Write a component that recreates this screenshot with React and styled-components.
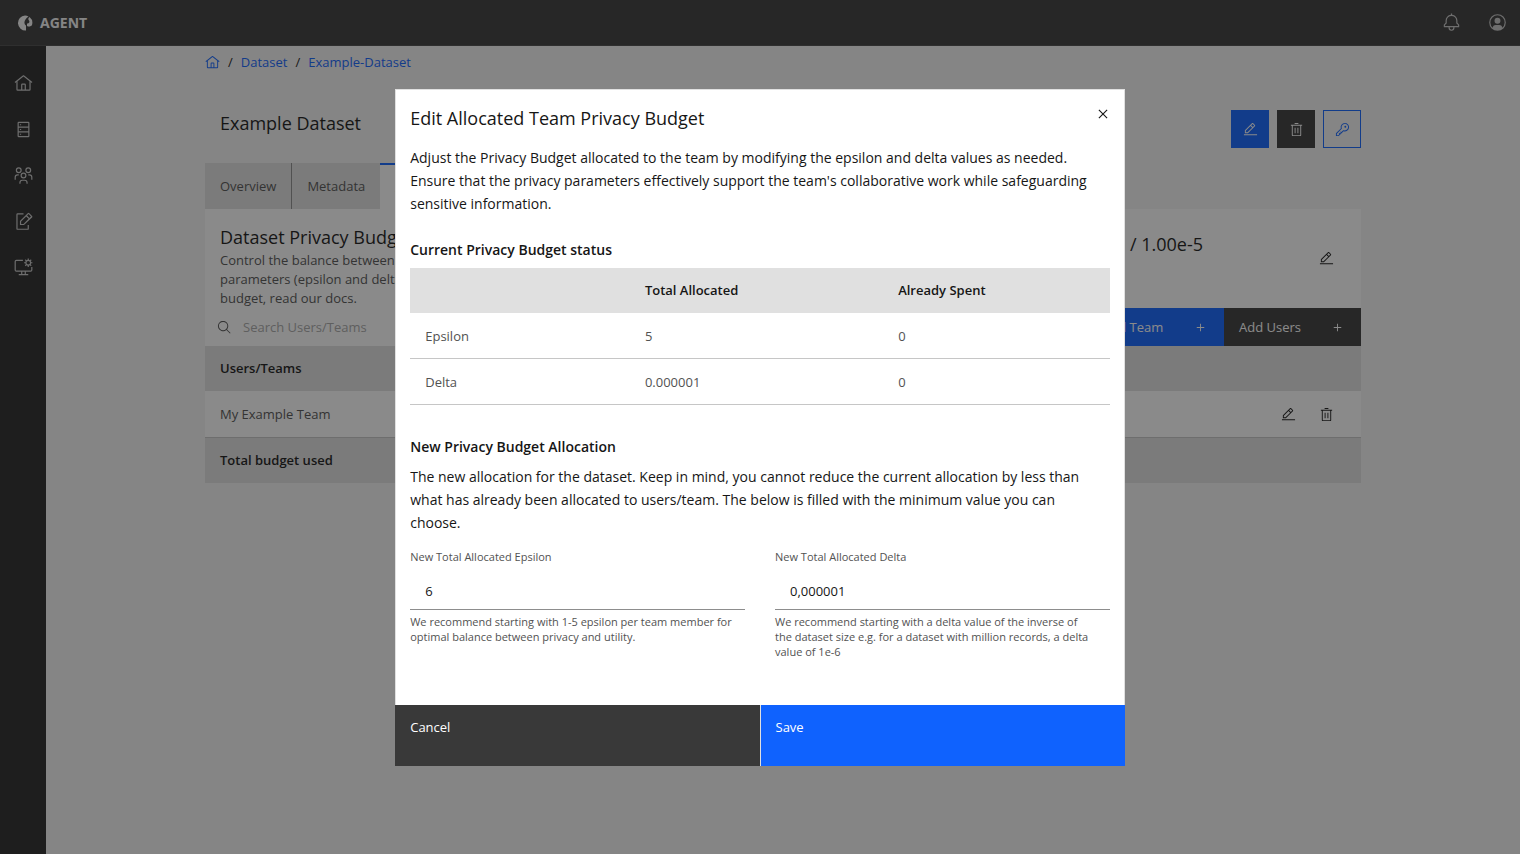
import React from "react"
import styled, { createGlobalStyle, css } from "styled-components"

const colors = {
  page: "#f4f4f4",
  white: "#ffffff",
  header: "#393939",
  sidebar: "#262626",
  grey_200: "#e0e0e0",
  grey_300: "#c6c6c6",
  grey_500: "#8d8d8d",
  grey_700: "#525252",
  text: "#161616",
  blue: "#0f62fe",
  overlay: "rgba(22, 22, 22, 0.5)"
}

const icons = {
  home:
    "M16.6123,2.2138a1.01,1.01,0,0,0-1.2427,0L1,13.4194l1.2427,1.5717L4,13.6208V26a2.0041,2.0041,0,0,0,2,2H26a2.0037,2.0037,0,0,0,2-2V13.63L29.7573,15,31,13.4282ZM18,26H14V18h4Zm2,0V18a2.0023,2.0023,0,0,0-2-2H14a2.002,2.002,0,0,0-2,2v8H6V12.0615l10-7.79,10,7.8005V26Z",
  database:
    "M24,3H8A2,2,0,0,0,6,5V27a2,2,0,0,0,2,2H24a2,2,0,0,0,2-2V5A2,2,0,0,0,24,3Zm0,2v6H8V5ZM8,19V13H24v6Zm0,8V21H24v6ZM10,7h2v2h-2zM10,15h2v2h-2zM10,23h2v2h-2z",
  teams:
    "M26,14H24v2h2a3.0033,3.0033,0,0,1,3,3v4h2V19A5.0058,5.0058,0,0,0,26,14Z M24,4a3,3,0,1,1-3,3,3,3,0,0,1,3-3m0-2a5,5,0,1,0,5,5A5,5,0,0,0,24,2Z M23,30H21V28a3.0033,3.0033,0,0,0-3-3H14a3.0033,3.0033,0,0,0-3,3v2H9V28a5.0059,5.0059,0,0,1,5-5h4a5.0059,5.0059,0,0,1,5,5Z M16,13a3,3,0,1,1-3,3,3,3,0,0,1,3-3m0-2a5,5,0,1,0,5,5A5,5,0,0,0,16,11Z M8,14H6a5.0059,5.0059,0,0,0-5,5v4H3V19a3.0033,3.0033,0,0,1,3-3H8Z M8,4A3,3,0,1,1,5,7,3,3,0,0,1,8,4M8,2a5,5,0,1,0,5,5A5,5,0,0,0,8,2Z",
  note:
    "M23,30H6a2,2,0,0,1-2-2V4A2,2,0,0,1,6,2H16V4H6V28H23V22h2v6A2,2,0,0,1,23,30Z M30.4,6.6,25.9,2.1a2,2,0,0,0-2.8,0L10,15.2V22h6.8L30.4,9.4A2,2,0,0,0,30.4,6.6ZM16,20H12V16l8.5-8.5,4,4ZM26,10,22,6l2.5-2.5,4,4Z",
  desktop:
    "M29,15v5a1,1,0,0,1-1,1H4a1,1,0,0,1-1-1V6A1,1,0,0,1,4,5H15V3H4A3,3,0,0,0,1,6V20a3,3,0,0,0,3,3h8v4H8v2H24V27H20V23h8a3,3,0,0,0,3-3V15ZM18,27H14V23h4Z M31,9V7H28.9a5,5,0,0,0-.7-1.8l1.5-1.5L28.3,2.3,26.8,3.8A5,5,0,0,0,25,3.1V1H23V3.1a5,5,0,0,0-1.8.7L19.7,2.3,18.3,3.7l1.5,1.5A5,5,0,0,0,19.1,7H17v2h2.1a5,5,0,0,0,.7,1.8l-1.5,1.5,1.4,1.4,1.5-1.5a5,5,0,0,0,1.8.7V15h2V12.9a5,5,0,0,0,1.8-.7l1.5,1.5,1.4-1.4-1.5-1.5A5,5,0,0,0,28.9,9Zm-7,2a3,3,0,1,1,3-3A3,3,0,0,1,24,11Z",
  bell:
    "M28.7071,19.293,26,16.5859V13a10.0136,10.0136,0,0,0-9-9.9492V1H15V3.0508A10.0136,10.0136,0,0,0,6,13v3.5859L3.2929,19.293A1,1,0,0,0,3,20v3a1,1,0,0,0,1,1h7v.7768a5.152,5.152,0,0,0,4.5,5.1987A5.0057,5.0057,0,0,0,21,25V24h7a1,1,0,0,0,1-1V20A1,1,0,0,0,28.7071,19.293ZM19,25a3,3,0,0,1-6,0V24h6Zm8-3H5V20.4141L7.707,17.707A1,1,0,0,0,8,17V13a8,8,0,0,1,16,0v4a1,1,0,0,0,.293.707L27,20.4141Z",
  avatar:
    "M16,8a5,5,0,1,0,5,5A5,5,0,0,0,16,8Z M16,2A14,14,0,1,0,30,16,14.0158,14.0158,0,0,0,16,2Zm7.9925,22.9258A5.0016,5.0016,0,0,0,19,20H13a5.0016,5.0016,0,0,0-4.9925,4.9258,12,12,0,1,1,15.985,0Z",
  edit:
    "M2 26H30V28H2z M25.4 9c.8-.8.8-2 0-2.8l-3.6-3.6c-.8-.8-2-.8-2.8 0l-15 15V24h6.4L25.4 9zM20.4 4L24 7.6l-3 3L17.4 7 20.4 4zM6 22v-3.6l10-10 3.6 3.6-10 10H6z",
  trash:
    "M12 12H14V24H12z M18 12H20V24H18z M4 6V8H6V28a2 2 0 002 2H24a2 2 0 002-2V8h2V6zM8 28V8H24V28z M12 2H20V4H12z",
  key:
    "M21,2a8.9977,8.9977,0,0,0-8.6119,11.6118L2,24v6H8L18.3881,19.6118A9,9,0,1,0,21,2Zm0,16a7.0125,7.0125,0,0,1-2.0322-.3022L17.821,17.35l-.8472.8472-3.1811,3.1812L12.4141,20,11,21.4141l1.3787,1.3786-1.5859,1.586L9.4141,23,8,24.4141l1.3787,1.3786L7.1716,28H4V24.8284l9.8023-9.8023.8472-.8474-.3473-1.1467A7,7,0,1,1,21,18Z M22,8a2,2,0,1,0,2,2A2,2,0,0,0,22,8Z",
  search:
    "M29,27.5859l-7.5521-7.5521a11.0177,11.0177,0,1,0-1.4141,1.4141L27.5859,29ZM4,13a9,9,0,1,1,9,9A9.01,9.01,0,0,1,4,13Z",
  add: "M17 15L17 8 15 8 15 15 8 15 8 17 15 17 15 24 17 24 17 17 24 17 24 15z",
  close:
    "M24 9.4L22.6 8 16 14.6 9.4 8 8 9.4 14.6 16 8 22.6 9.4 24 16 17.4 22.6 24 24 22.6 17.4 16 24 9.4z"
}

const Icon = ({ name, size = 15 }) => (
  <svg width={size} height={size} viewBox="0 0 32 32" fill="currentColor" aria-hidden="true">
    <path d={icons[name]} />
  </svg>
)

const Logo = () => (
  <svg width="16" height="16" viewBox="0 0 32 32" aria-hidden="true">
    <path
      fill="currentColor"
      d="M16 1A15 15 0 1 0 18 31V21C14 18 14 13 17 9C18 7 20 5 23 3A15 15 0 0 0 16 1ZM25 4A15 15 0 0 1 30 20C28 23 24 24 20 22V17C24 17 26 14 24 11C22 9 22 6 25 4Z"
    />
  </svg>
)

const navItems = [
  { icon: "home", label: "Home" },
  { icon: "database", label: "Datasets" },
  { icon: "teams", label: "Teams" },
  { icon: "note", label: "Projects" },
  { icon: "desktop", label: "Settings" }
]

const budgetRows = [
  { name: "Epsilon", total: "5", spent: "0" },
  { name: "Delta", total: "0.000001", spent: "0" }
]

const fields = [
  {
    id: "epsilon",
    label: "New Total Allocated Epsilon",
    value: "6",
    help:
      "We recommend starting with 1-5 epsilon per team member for\noptimal balance between privacy and utility."
  },
  {
    id: "delta",
    label: "New Total Allocated Delta",
    value: "0,000001",
    help:
      "We recommend starting with a delta value of the inverse of\nthe dataset size e.g. for a dataset with million records, a delta\nvalue of 1e-6"
  }
]

const EditBudgetModal = () => (
  <Overlay>
    <Modal role="dialog" aria-modal="true" aria-labelledby="modal-title">
      <ModalBody>
        <ModalHeader>
          <Title as="h2" id="modal-title">
            Edit Allocated Team Privacy Budget
          </Title>
          <CloseButton aria-label="Close">
            <Icon name="close" size={18} />
          </CloseButton>
        </ModalHeader>
        <Intro>
          Adjust the Privacy Budget allocated to the team by modifying the epsilon and delta values
          as needed. Ensure that the privacy parameters effectively support the team's collaborative
          work while safeguarding sensitive information.
        </Intro>
        <Heading>Current Privacy Budget status</Heading>
        <BudgetTable>
          <thead>
            <tr>
              <HeadCell $width="31.4%" />
              <HeadCell $width="36.2%">Total Allocated</HeadCell>
              <HeadCell>Already Spent</HeadCell>
            </tr>
          </thead>
          <tbody>
            {budgetRows.map(row => (
              <tr key={row.name}>
                <Cell>{row.name}</Cell>
                <Cell>{row.total}</Cell>
                <Cell>{row.spent}</Cell>
              </tr>
            ))}
          </tbody>
        </BudgetTable>
        <Heading>New Privacy Budget Allocation</Heading>
        <Copy>
          The new allocation for the dataset. Keep in mind, you cannot reduce the current allocation
          by less than what has already been allocated to users/team. The below is filled with the
          minimum value you can choose.
        </Copy>
        <Fields>
          {fields.map(field => (
            <Field key={field.id}>
              <Label htmlFor={field.id}>{field.label}</Label>
              <Input id={field.id} defaultValue={field.value} aria-describedby={`${field.id}-help`} />
              <Help id={`${field.id}-help`}>{field.help}</Help>
            </Field>
          ))}
        </Fields>
      </ModalBody>
      <ModalFooter>
        <FooterButton>Cancel</FooterButton>
        <FooterButton $primary>Save</FooterButton>
      </ModalFooter>
    </Modal>
  </Overlay>
)

export default () => {
  return (
    <>
      <GlobalStyle />
      <Shell>
        <Header>
          <Brand href="#">
            <Logo />
            AGENT
          </Brand>
          <HeaderActions>
            <HeaderButton aria-label="Notifications">
              <Icon name="bell" size={19} />
            </HeaderButton>
            <HeaderButton aria-label="Account">
              <Icon name="avatar" size={19} />
            </HeaderButton>
          </HeaderActions>
        </Header>
        <Body>
          <Sidebar>
            {navItems.map(item => (
              <NavLink key={item.icon} href="#" aria-label={item.label}>
                <Icon name={item.icon} size={19} />
              </NavLink>
            ))}
          </Sidebar>
          <Main>
            <Container>
              <Breadcrumb>
                <a href="#" aria-label="Home">
                  <Icon name="home" />
                </a>
                <span>/</span>
                <a href="#">Dataset</a>
                <span>/</span>
                <a href="#">Example-Dataset</a>
              </Breadcrumb>
              <TitleRow>
                <Title>Example Dataset</Title>
                <Actions>
                  <IconButton $kind="primary" aria-label="Edit dataset">
                    <Icon name="edit" />
                  </IconButton>
                  <IconButton $kind="secondary" aria-label="Delete dataset">
                    <Icon name="trash" />
                  </IconButton>
                  <IconButton $kind="outline" aria-label="Credentials">
                    <Icon name="key" />
                  </IconButton>
                </Actions>
              </TitleRow>
              <Tabs role="tablist">
                <Tab role="tab">Overview</Tab>
                <Tab role="tab">Metadata</Tab>
                <Tab role="tab" aria-selected="true" $active>
                  Access
                </Tab>
              </Tabs>
              <Panel>
                <PanelCopy>
                  <Title as="h2">Dataset Privacy Budget</Title>
                  <p>
                    Control the balance between the utility
                    <br />
                    parameters (epsilon and delta). For more on the
                    <br />
                    budget, read our docs.
                  </p>
                </PanelCopy>
                <PanelBudget>0.00 / 1.00e-5</PanelBudget>
                <GhostButton aria-label="Edit budget">
                  <Icon name="edit" />
                </GhostButton>
              </Panel>
              <Toolbar>
                <Search>
                  <Icon name="search" />
                  <input type="search" placeholder="Search Users/Teams" aria-label="Search" />
                </Search>
                <ToolbarButton $primary>
                  Add Team
                  <Icon name="add" />
                </ToolbarButton>
                <ToolbarButton>
                  Add Users
                  <Icon name="add" />
                </ToolbarButton>
              </Toolbar>
              <UsersTable>
                <thead>
                  <tr>
                    <HeadCell>Users/Teams</HeadCell>
                    <HeadCell $width="10%" />
                  </tr>
                </thead>
                <tbody>
                  <tr>
                    <Cell>My Example Team</Cell>
                    <Cell>
                      <RowActions>
                        <GhostButton aria-label="Edit team">
                          <Icon name="edit" />
                        </GhostButton>
                        <GhostButton aria-label="Remove team">
                          <Icon name="trash" />
                        </GhostButton>
                      </RowActions>
                    </Cell>
                  </tr>
                  <tr>
                    <HeadCell>Total budget used</HeadCell>
                    <HeadCell />
                  </tr>
                </tbody>
              </UsersTable>
            </Container>
          </Main>
        </Body>
      </Shell>
      <EditBudgetModal />
    </>
  )
}

const GlobalStyle = createGlobalStyle`
  * {
    box-sizing: border-box;
  }
  body {
    margin: 0;
    background: ${colors.page};
    color: ${colors.text};
    font-family: "Open Sans", "Noto Sans", sans-serif;
    font-size: 13px;
    line-height: 19px;
  }
  h1, h2, h3, p {
    margin: 0;
  }
  button, input {
    font: inherit;
    border: 0;
    border-radius: 0;
  }
  button {
    cursor: pointer;
  }
  a {
    color: ${colors.blue};
    text-decoration: none;
  }
  svg {
    display: block;
    flex: none;
  }
`

const Shell = styled.div`
  display: flex;
  flex-direction: column;
  min-height: 100vh;
`

const Header = styled.header`
  display: flex;
  align-items: center;
  justify-content: space-between;
  height: 46px;
  padding-left: 17px;
  background: ${colors.header};
  border-bottom: 1px solid #484848;
`

const Brand = styled.a`
  display: flex;
  align-items: center;
  gap: 7px;
  color: ${colors.page};
  font-size: 14px;
  font-weight: 700;
`

const HeaderActions = styled.div`
  display: flex;
`

const HeaderButton = styled.button`
  display: flex;
  align-items: center;
  justify-content: center;
  width: 46px;
  height: 46px;
  padding: 0;
  background: transparent;
  color: ${colors.grey_300};
`

const Body = styled.div`
  display: flex;
  flex: 1;
`

const Sidebar = styled.nav`
  width: 46px;
  padding-top: 14px;
  background: ${colors.sidebar};
`

const NavLink = styled.a`
  display: flex;
  align-items: center;
  justify-content: center;
  height: 46px;
  color: ${colors.grey_300};
`

const Main = styled.main`
  flex: 1;
  padding: 0 30px;
`

const Container = styled.div`
  max-width: 1156px;
  margin: 0 auto;
`

const Breadcrumb = styled.nav`
  display: flex;
  align-items: center;
  gap: 8px;
  padding-top: 7px;
`

const TitleRow = styled.div`
  display: flex;
  justify-content: space-between;
  align-items: flex-start;
  margin-top: 38px;
  padding-left: 15px;
`

const Title = styled.h1`
  font-size: 18px;
  font-weight: 400;
  line-height: 27px;
`

const Actions = styled.div`
  display: flex;
  gap: 8px;
`

const kinds = {
  primary: css`
    background: ${colors.blue};
    color: ${colors.white};
  `,
  secondary: css`
    background: ${colors.header};
    color: ${colors.white};
  `,
  outline: css`
    background: transparent;
    border: 1px solid ${colors.blue};
    color: ${colors.blue};
  `
}

const IconButton = styled.button`
  display: flex;
  align-items: center;
  justify-content: center;
  width: 38px;
  height: 38px;
  padding: 0;
  ${props => kinds[props.$kind]}
`

const Tabs = styled.div`
  display: flex;
  margin-top: 15px;
`

const Tab = styled.button`
  height: 46px;
  padding: 0 15px;
  background: ${colors.grey_200};
  color: ${colors.grey_700};
  & + & {
    border-left: 1px solid ${colors.grey_500};
  }
  ${props =>
    props.$active &&
    css`
      && {
        border-left: 0;
      }
      border-top: 2px solid ${colors.blue};
      background: ${colors.white};
      color: ${colors.text};
      font-weight: 600;
    `}
`

const Panel = styled.section`
  display: flex;
  padding: 0 27px 0 15px;
  background: ${colors.white};
`

const PanelCopy = styled.div`
  flex: 1;
  padding-top: 15px;
  color: ${colors.grey_700};
  h2 {
    color: ${colors.text};
  }
`

const PanelBudget = styled.p`
  padding-top: 22px;
  margin-right: 116px;
  font-size: 18px;
  line-height: 27px;
`

const GhostButton = styled.button`
  align-self: center;
  padding: 0;
  background: transparent;
  color: ${colors.text};
`

const Toolbar = styled.div`
  display: flex;
  height: 38px;
  background: ${colors.white};
`

const Search = styled.div`
  display: flex;
  flex: 1;
  align-items: center;
  gap: 11px;
  padding-left: 12px;
  color: ${colors.grey_700};
  input {
    flex: 1;
    padding: 0;
    outline: 0;
    background: transparent;
  }
  input::placeholder {
    color: #a8a8a8;
  }
`

const ToolbarButton = styled.button`
  display: flex;
  align-items: center;
  justify-content: space-between;
  width: 137px;
  padding: 0 16px 0 15px;
  color: ${colors.white};
  background: ${props => (props.$primary ? colors.blue : colors.header)};
`

const Cell = styled.td`
  height: 47px;
  padding: 1px 15px 0;
  border-bottom: 1px solid ${colors.grey_300};
  color: ${colors.grey_700};
`

const HeadCell = styled.th`
  width: ${props => props.$width};
  height: 45px;
  padding: 0 15px;
  background: ${colors.grey_200};
  font-weight: 600;
  text-align: left;
`

const UsersTable = styled.table`
  width: 100%;
  border-collapse: separate;
  border-spacing: 0;
  background: ${colors.white};
`

const BudgetTable = styled(UsersTable)`
  margin-bottom: 30px;
  table-layout: fixed;
  ${Cell} {
    height: 46px;
    padding-top: 2px;
  }
`

const RowActions = styled.div`
  display: flex;
  justify-content: flex-end;
  gap: 23px;
  padding-right: 12px;
`

const Overlay = styled.div`
  position: fixed;
  inset: 0;
  display: flex;
  align-items: center;
  justify-content: center;
  background: ${colors.overlay};
`

const Modal = styled.section`
  width: 48%;
  min-width: 480px;
  background: ${colors.white};
`

const ModalBody = styled.div`
  padding: 15px 14px 46px;
  border: 1px solid ${colors.grey_200};
  border-bottom: 0;
`

const ModalHeader = styled.div`
  display: flex;
  justify-content: space-between;
  align-items: flex-start;
  margin-bottom: 14px;
`

const CloseButton = styled.button`
  display: flex;
  padding: 0;
  margin-right: -2px;
  background: transparent;
  color: ${colors.text};
`

const Copy = styled.p`
  padding-right: 5px;
  margin-bottom: 15px;
  font-size: 14px;
  line-height: 23px;
`

const Intro = styled(Copy)`
  margin-bottom: 23px;
`

const Heading = styled.h3`
  margin-bottom: 7px;
  font-size: 14px;
  font-weight: 600;
  line-height: 23px;
`

const Fields = styled.div`
  display: grid;
  grid-template-columns: 1fr 1fr;
  gap: 30px;
`

const Field = styled.div`
  display: flex;
  flex-direction: column;
  color: ${colors.grey_700};
  font-size: 11px;
  line-height: 15px;
`

const Label = styled.label`
  margin-bottom: 9px;
`

const Input = styled.input`
  width: 100%;
  height: 37px;
  padding: 0 15px;
  border-bottom: 1px solid ${colors.grey_500};
  outline: 0;
  color: ${colors.text};
  font-size: 13px;
`

const Help = styled.p`
  margin-top: 4px;
  white-space: pre-line;
`

const ModalFooter = styled.footer`
  display: grid;
  grid-template-columns: 1fr 1fr;
  gap: 1px;
  background: ${colors.grey_200};
`

const FooterButton = styled.button`
  height: 61px;
  padding: 13px 15px 29px;
  color: ${colors.white};
  background: ${props => (props.$primary ? colors.blue : colors.header)};
  font-weight: 500;
  text-align: left;
`
